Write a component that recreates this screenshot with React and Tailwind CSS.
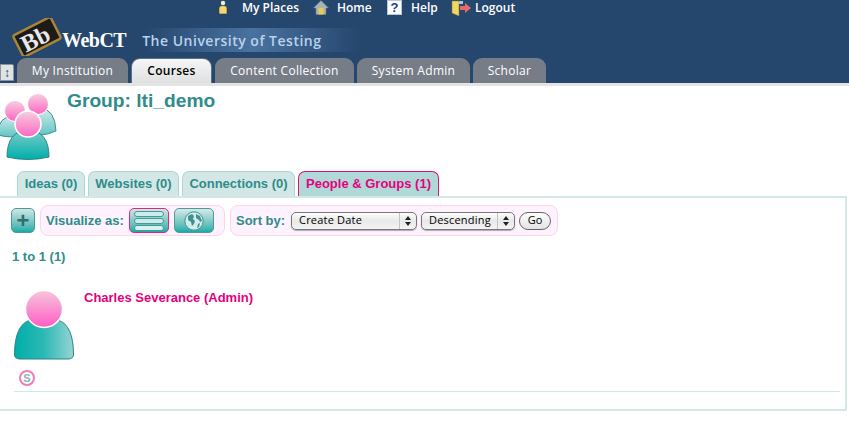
import React from "react";

const topLinks = [
  { label: "My Places", icon: "places", width: "w-[95px]" },
  { label: "Home", icon: "home", width: "w-[74px]" },
  { label: "Help", icon: "help", width: "w-[64px]" },
  { label: "Logout", icon: "logout", width: "w-[70px]" },
];

const mainTabs = [
  { label: "My Institution", width: "w-[111px]" },
  { label: "Courses", width: "w-[81px]", active: true },
  { label: "Content Collection", width: "w-[139px]" },
  { label: "System Admin", width: "w-[113px]" },
  { label: "Scholar", width: "w-[73px]" },
];

const groupTabs = [
  { label: "Ideas (0)", width: "w-[68px]" },
  { label: "Websites (0)", width: "w-[91px]" },
  { label: "Connections (0)", width: "w-[113px]" },
  { label: "People & Groups (1)", width: "w-[141px]", active: true },
];

const TopIcon = ({ name }) => {
  if (name === "places") {
    return (
      <svg width="10" height="15" viewBox="0 0 10 15">
        <circle cx="5" cy="3" r="2.2" fill="#f4efd8" />
        <path d="M1 14V8q0-2.5 4-2.5T9 8v6z" fill="#f0d873" stroke="#3a3a30" strokeWidth="0.6" />
      </svg>
    );
  }
  if (name === "home") {
    return (
      <svg width="16" height="15" viewBox="0 0 16 15">
        <path d="M8 0.5 15.5 8H13v6.5H3V8H0.5z" fill="#a9b3b5" stroke="#6d7c80" strokeWidth="0.5" />
        <rect x="5.5" y="8" width="5" height="6.5" fill="#eacb4e" />
      </svg>
    );
  }
  if (name === "help") {
    return (
      <div className="flex h-[15px] w-[15px] items-center justify-center border border-[#b9c6dc] bg-white font-['Liberation_Sans',sans-serif] text-[13px] leading-none font-bold text-[#1f3a8a]">
        ?
      </div>
    );
  }
  return (
    <svg width="20" height="16" viewBox="0 0 20 16">
      <path d="M1 1h7v15l-7-3z" fill="#f0d860" stroke="#8a7a30" strokeWidth="0.5" />
      <path d="M8 1h4v3H8z" fill="#a9c3e6" />
      <path d="M9 6h5V3l6 5-6 5v-3H9z" fill="#e66a6a" />
    </svg>
  );
};

const Logo = () => (
  <svg width="52" height="38" viewBox="0 0 52 38" className="mt-[-7px] shrink-0">
    <g transform="rotate(-27 26 19)">
      <rect x="5" y="7" width="42" height="24" rx="2" fill="#1d1b18" stroke="#a8853a" strokeWidth="2.5" />
      <text x="9" y="28" fontFamily="Liberation Serif, serif" fontSize="24" fontWeight="700" fill="#e8e8e8">
        Bb
      </text>
    </g>
  </svg>
);

const GroupIcon = () => (
  <svg width="58" height="68" viewBox="0 0 58 68" className="shrink-0">
    <defs>
      <linearGradient id="headFill" x1="0" y1="0" x2="0" y2="1">
        <stop offset="0" stopColor="#f6cfdf" />
        <stop offset="1" stopColor="#ff66c4" />
      </linearGradient>
      <linearGradient id="backBody" x1="0" y1="0" x2="0" y2="1">
        <stop offset="0" stopColor="#d6ecec" />
        <stop offset="1" stopColor="#5fc4c2" />
      </linearGradient>
      <linearGradient id="frontBody" x1="0" y1="0" x2="0" y2="1">
        <stop offset="0" stopColor="#7cccca" />
        <stop offset="1" stopColor="#00aeaa" />
      </linearGradient>
    </defs>
    <path d="M-3 42Q-2 23 15 22Q30 23 31 42Q14 46 -3 42Z" fill="url(#backBody)" stroke="#3d8f8d" strokeWidth="1" />
    <circle cx="15" cy="18" r="10.5" fill="url(#headFill)" stroke="#fff" strokeWidth="1" />
    <path d="M24 41Q25 16 40 15Q55 16 56 38Q40 45 24 41Z" fill="url(#backBody)" stroke="#3d8f8d" strokeWidth="1" />
    <circle cx="38" cy="11" r="10.5" fill="url(#headFill)" stroke="#fff" strokeWidth="1" />
    <path d="M7 64Q7 38 28 37Q49 38 49 64Q28 69 7 64Z" fill="url(#frontBody)" stroke="#2e8482" strokeWidth="1" />
    <circle cx="28" cy="31" r="13" fill="url(#headFill)" stroke="#fff" strokeWidth="1.5" />
  </svg>
);

const PersonIcon = () => (
  <svg width="60" height="70" viewBox="0 0 60 70" className="shrink-0">
    <defs>
      <linearGradient id="personHead" x1="0" y1="0" x2="0" y2="1">
        <stop offset="0" stopColor="#f6c6dc" />
        <stop offset="1" stopColor="#ff5cc4" />
      </linearGradient>
      <linearGradient id="personBody" x1="0" y1="0" x2="1" y2="0">
        <stop offset="0" stopColor="#00aeaa" />
        <stop offset="0.5" stopColor="#2cb9b5" />
        <stop offset="1" stopColor="#96d4d4" />
      </linearGradient>
    </defs>
    <path d="M0.5 64Q0.5 34 16 29H44Q59.5 34 59.5 64Q59 68 54 68H6Q1 68 0.5 64Z" fill="url(#personBody)" stroke="#2e8482" strokeWidth="1" />
    <circle cx="30" cy="18" r="18.5" fill="url(#personHead)" stroke="#fff" strokeWidth="1.5" />
  </svg>
);

const ListButton = () => (
  <div className="flex h-[25px] w-[40px] flex-col items-center justify-center gap-[1px] rounded-[5px] border border-[#e0287c] bg-gradient-to-b from-[#cde6e6] to-[#05aca8]">
    <div className="h-[6px] w-[30px] rounded-full border border-[#3f9c9a] bg-[#cfeaea]" />
    <div className="h-[6px] w-[30px] rounded-full border border-[#3f9c9a] bg-[#cfeaea]" />
    <div className="h-[6px] w-[30px] rounded-full border border-[#3f9c9a] bg-[#dcf0f0]" />
  </div>
);

const GlobeButton = () => (
  <div className="flex h-[25px] w-[40px] items-center justify-center rounded-[5px] border border-[#4d9a9a] bg-gradient-to-b from-[#d4e9e9] to-[#05aca8]">
    <svg width="20" height="20" viewBox="0 0 20 20">
      <circle cx="10" cy="10" r="9.2" fill="#d5ecec" stroke="#3d9391" strokeWidth="1" />
      <path d="M4 5l4-2 2 2-1 3 2 2-1 3-2 2-1-4-3-2zM12 3l4 2 2 5-2 1-1-2-3-2zM14 13l2-1-1 4-2 1z" fill="#3d9391" />
    </svg>
  </div>
);

const FakeSelect = ({ label, width }) => (
  <div className={`flex h-[18px] items-center justify-between rounded-[5px] border border-[#77777b] bg-gradient-to-b from-[#fdfdfd] via-[#e8e8e8] to-[#f4f4f4] font-['Open_Sans',sans-serif] text-[11px] font-normal tracking-[0.2px] text-black shadow-[0_1px_1px_rgba(0,0,0,0.3)] ${width}`}>
    <span className="pl-[7px]">{label}</span>
    <div className="flex h-full w-[17px] flex-col items-center justify-center gap-[2px] border-l border-[#c4c4c4]">
      <div className="h-0 w-0 border-x-[3px] border-b-[4px] border-x-transparent border-b-[#222]" />
      <div className="h-0 w-0 border-x-[3px] border-t-[4px] border-x-transparent border-t-[#222]" />
    </div>
  </div>
);

const Header = () => (
  <header className="h-[83px] w-full bg-[#25466d] font-['Open_Sans',sans-serif] text-white">
    <nav className="flex h-[15px] items-center pl-[218px] text-[12px] font-semibold">
      {topLinks.map((link) => (
        <div key={link.label} className={`flex items-center ${link.width}`}>
          <div className="flex w-[24px] shrink-0 items-center">
            <TopIcon name={link.icon} />
          </div>
          <span className="leading-none">{link.label}</span>
        </div>
      ))}
    </nav>
    <div className="flex h-[43px] items-center pl-[11px] pt-[7px]">
      <Logo />
      <span className="ml-[-1px] font-['Liberation_Serif',serif] text-[20px] leading-none font-bold tracking-[-0.5px] text-white">
        WebCT
      </span>
      <div className="ml-[16px] bg-gradient-to-r from-transparent via-[#4a729e] to-transparent pr-[40px]">
        <span className="font-['Open_Sans',sans-serif] text-[14px] font-semibold tracking-[0.5px] text-[#b9d2ec]">
          The University of Testing
        </span>
      </div>
    </div>
    <div className="flex h-[25px] items-end">
      <div className="mb-[2px] flex h-[17px] w-[14px] items-center justify-center rounded-tr-[2px] border border-[#8e949a] bg-[#dfe3e6] text-[12px] leading-none text-[#444]">
        ↕
      </div>
      <div className="ml-[3px] flex gap-[3px]">
        {mainTabs.map((tab) => (
          <div
            key={tab.label}
            className={`flex h-[25px] items-center justify-center rounded-t-[9px] text-[12px] tracking-[0.3px] ${tab.width} ${
              tab.active
                ? "border-x border-t border-[#5b6f86] bg-gradient-to-b from-[#f6f6f6] to-[#e0e0e0] font-semibold text-black"
                : "bg-[#767d87] font-medium text-white"
            }`}
          >
            {tab.label}
          </div>
        ))}
      </div>
    </div>
  </header>
);

export default function App() {
  return (
    <div className="h-[422px] w-[849px] overflow-hidden bg-white font-['Liberation_Sans',sans-serif]">
      <Header />
      <div className="h-[3px] bg-[#e4e4e4]" />

      <section className="flex h-[85px] pt-[7px]">
        <GroupIcon />
        <h1 className="ml-[9px] mt-[-3px] text-[19.2px] leading-[21px] font-bold text-[#2f8c8a]">
          Group: lti_demo
        </h1>
      </section>

      <div className="flex h-[25px] items-end gap-[3px] pl-[17px]">
        {groupTabs.map((tab) => (
          <div
            key={tab.label}
            className={`flex h-[25px] items-center justify-center rounded-t-[7px] border-x border-t text-[13px] font-bold ${tab.width} ${
              tab.active
                ? "border-[#e0107c] bg-[#afd8d6] text-[#e6007e]"
                : "border-[#a9d8d6] bg-[#d3e8e6] text-[#2f8c8a]"
            }`}
          >
            {tab.label}
          </div>
        ))}
      </div>

      <main className="mr-[2px] h-[215px] border-y-2 border-r-2 border-[#d3e8e6] bg-white">
        <div className="flex items-center pl-[11px] pt-[7px]">
          <div className="flex h-[25px] w-[24px] items-center justify-center rounded-[5px] border border-[#4d9a9a] bg-gradient-to-b from-[#cfe6e6] to-[#05aca8] text-[22px] leading-none font-bold text-[#2f6f6e]">
            +
          </div>
          <div className="ml-[5px] flex h-[31px] w-[185px] items-center rounded-[8px] border border-[#fcd5ea] bg-[#fdf2fd] pl-[5px] text-[13px] font-bold text-[#2f8c8a]">
            <span className="w-[83px]">Visualize as:</span>
            <ListButton />
            <div className="w-[5px]" />
            <GlobeButton />
          </div>
          <div className="ml-[5px] flex h-[31px] w-[328px] items-center rounded-[8px] border border-[#fcd5ea] bg-[#fdf2fd] pl-[5px] text-[13px] font-bold text-[#2f8c8a]">
            <span className="w-[55px]">Sort by:</span>
            <FakeSelect label="Create Date" width="w-[126px]" />
            <div className="w-[4px]" />
            <FakeSelect label="Descending" width="w-[94px]" />
            <div className="w-[4px]" />
            <div className="flex h-[18px] w-[32px] items-center justify-center rounded-full border border-[#66666a] bg-gradient-to-b from-[#fdfdfd] to-[#e4e4e4] font-['Open_Sans',sans-serif] text-[11px] font-normal text-black">
              Go
            </div>
          </div>
        </div>

        <p className="mt-[14px] pl-[12px] text-[13px] leading-[14px] font-bold text-[#2f8c8a]">1 to 1 (1)</p>

        <div className="mx-[14px] mt-[27px] flex h-[101px] w-[826px] border-b border-[#d3e8e6]">
          <div className="flex w-[70px] flex-col">
            <PersonIcon />
            <div className="ml-[5px] mt-[9px] flex h-[16px] w-[16px] items-center justify-center rounded-full border-[2px] border-[#f47ab8] text-[11px] leading-none font-bold text-[#8ab4b4]">
              S
            </div>
          </div>
          <a className="text-[13px] leading-[14px] font-bold text-[#e6007e]">Charles Severance (Admin)</a>
        </div>
      </main>
    </div>
  );
}
